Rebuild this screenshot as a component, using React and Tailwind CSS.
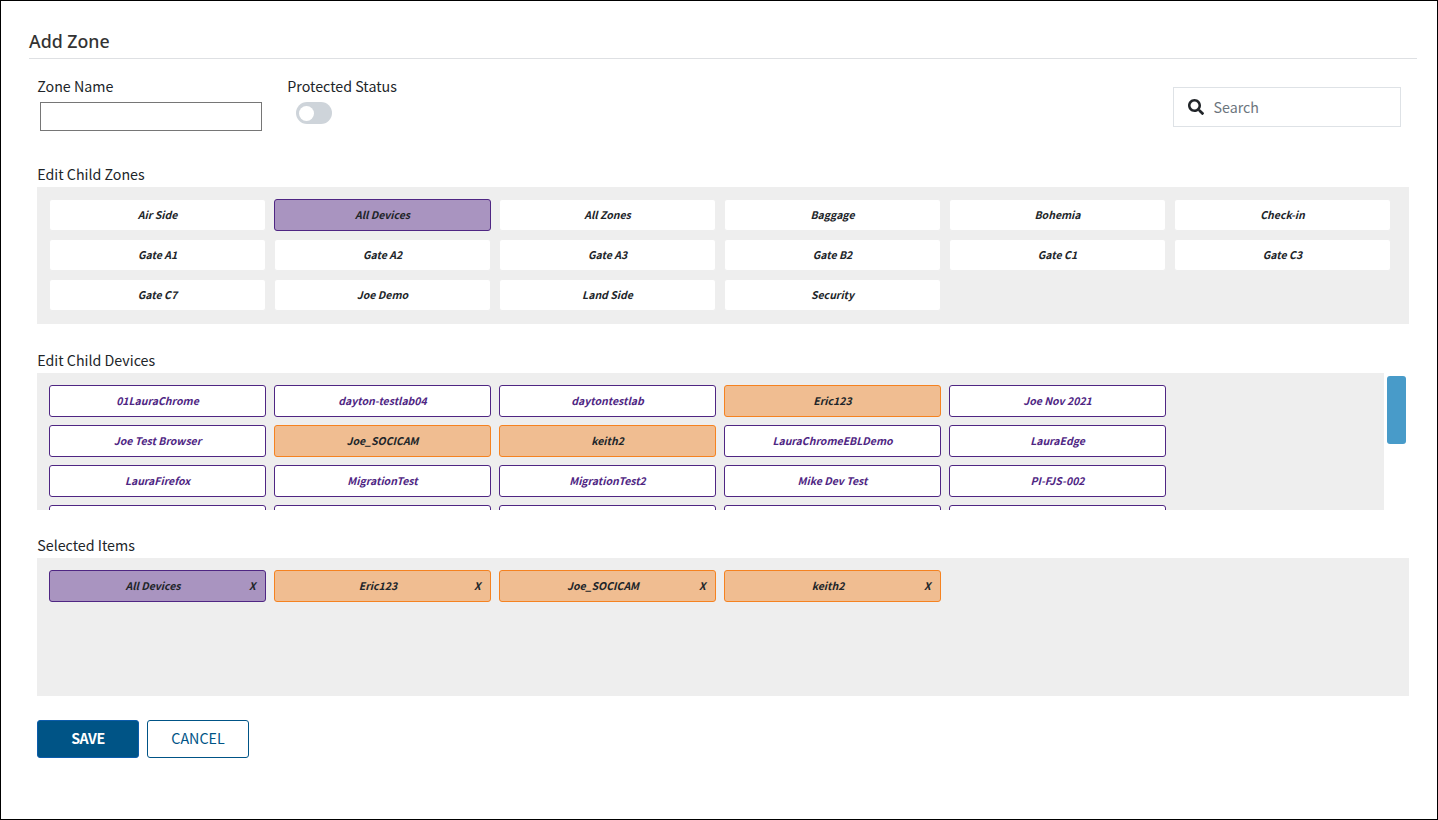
import { FaSearch } from "react-icons/fa";

const zones = [
  "Air Side", "All Devices", "All Zones", "Baggage", "Bohemia", "Check-in",
  "Gate A1", "Gate A2", "Gate A3", "Gate B2", "Gate C1", "Gate C3",
  "Gate C7", "Joe Demo", "Land Side", "Security",
];

const devices = [
  "01LauraChrome", "dayton-testlab04", "daytontestlab", "Eric123", "Joe Nov 2021",
  "Joe Test Browser", "Joe_SOCICAM", "keith2", "LauraChromeEBLDemo", "LauraEdge",
  "LauraFirefox", "MigrationTest", "MigrationTest2", "Mike Dev Test", "PI-FJS-002",
  "", "", "", "", "",
];

const selected = ["All Devices", "Eric123", "Joe_SOCICAM", "keith2"];

const tones = {
  plain: "border-[#eeeeee] bg-white text-[#212529]",
  device: "border-[#4f2683] bg-white text-[#4f2683]",
  purple: "border-[#4f2683] bg-[#a994c0] text-[#212529]",
  orange: "border-[#f58220] bg-[#f0bd91] text-[#212529]",
};

function Chip({ label, tone, removable }) {
  return (
    <button
      className={`flex h-8 w-[217px] items-center rounded-[3px] border text-[10.5px] leading-4 font-bold italic ${tones[tone]}`}
    >
      <span className="flex-1 text-center whitespace-nowrap">{label}</span>
      {removable && <span className="-ml-[7px] w-4 pr-[10px]">X</span>}
    </button>
  );
}

function Label({ children }) {
  return <div className="h-[25px] pl-[0.25px] text-[14.25px] leading-6 whitespace-nowrap">{children}</div>;
}

export default function App() {
  return (
    <div className="h-[820px] w-[1438px] overflow-hidden border border-black bg-white font-['Noto_Sans_CJK_SC',sans-serif] text-[#212529]">
      <header className="mr-5 ml-7 h-[58px] border-b border-[#dee0e3] pt-7">
        <h1 className="font-['Noto_Sans',sans-serif] text-[17.75px] leading-6 font-medium text-[#333333]">Add Zone</h1>
      </header>

      <main className="ml-9 w-[1372px]">
        <div className="flex h-[103px] items-start pt-[15px]">
          <div className="w-[250px]">
            <Label>Zone Name</Label>
            <input className="mt-[3px] ml-[3px] block h-[29px] w-[222px] border border-[#767676] bg-white" />
          </div>
          <div>
            <Label>Protected Status</Label>
            <button className="mt-[3px] ml-[9px] flex h-[22px] w-9 items-center rounded-full bg-[#ced4da] pl-[3px]">
              <span className="size-[15px] rounded-full bg-white" />
            </button>
          </div>
          <div className="mt-[13px] mr-2 ml-auto flex h-10 w-[228px] items-center border border-[#dee2e6] pl-3.5">
            <FaSearch className="size-4" />
            <span className="ml-[9.5px] text-[14.25px] leading-6 text-[#6c757d]">Search</span>
          </div>
        </div>

        <section>
          <Label>Edit Child Zones</Label>
          <div className="flex h-[137px] flex-wrap content-start gap-2 bg-[#eeeeee] pt-3 pl-3">
            {zones.map((z) => (
              <Chip key={z} label={z} tone={z === "All Devices" ? "purple" : "plain"} />
            ))}
          </div>
        </section>

        <section className="mt-6">
          <Label>Edit Child Devices</Label>
          <div className="flex h-[137px] items-start">
            <div className="grid h-[137px] w-[1347px] grid-cols-[repeat(5,217px)] content-start gap-2 overflow-hidden bg-[#eeeeee] pt-3 pl-3">
              {devices.map((d, i) => (
                <Chip key={i} label={d} tone={selected.includes(d) ? "orange" : "device"} />
              ))}
            </div>
            <div className="mt-[3px] ml-[3px] h-[68px] w-[19px] rounded-[3px] bg-[#489bc9]" />
          </div>
        </section>

        <section className="mt-[23px]">
          <Label>Selected Items</Label>
          <div className="flex h-[138px] content-start items-start gap-2 bg-[#eeeeee] pt-3 pl-3">
            {selected.map((s) => (
              <Chip key={s} label={s} tone={s === "All Devices" ? "purple" : "orange"} removable />
            ))}
          </div>
        </section>

        <div className="mt-6 flex gap-2 text-[14.25px] leading-6">
          <button className="h-[38px] w-[102px] rounded-[3px] border border-[#0b5cab] bg-[#005486] pb-0.5 font-bold tracking-[-0.4px] text-white">SAVE</button>
          <button className="h-[38px] w-[102px] rounded-[3px] border border-[#005486] bg-white pb-0.5 text-[#005486]">CANCEL</button>
        </div>
      </main>
    </div>
  );
}
